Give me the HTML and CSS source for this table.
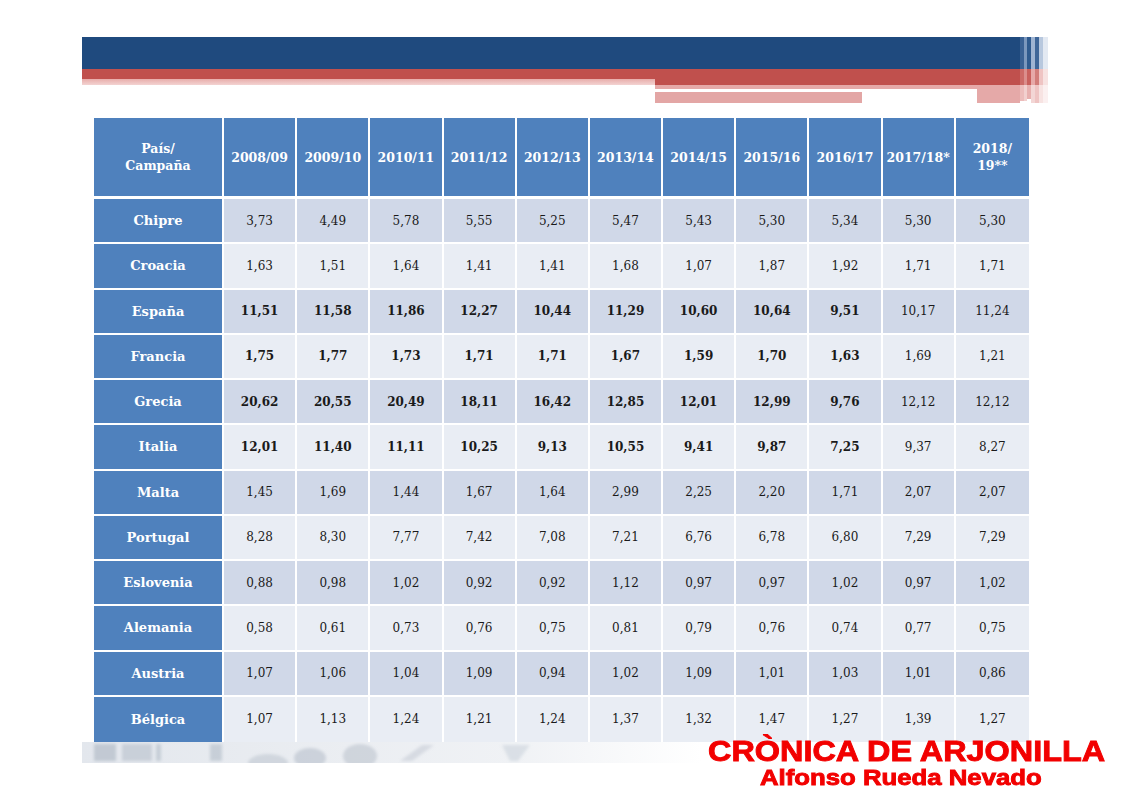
FILE: index.html
```html
<!DOCTYPE html>
<html lang="es">
<head>
<meta charset="utf-8">
<title>Producción de aceite de oliva por país</title>
<link rel="stylesheet" href="styles.css">
</head>
<body>
<div class="slide">
  <div class="banner">
    <div class="banner-main">
      <div class="b-blue"></div>
      <div class="b-red-row">
        <div class="b-left">
          <div class="b-red-thin"></div>
          <div class="b-pink-thin"></div>
        </div>
        <div class="b-red-right"></div>
      </div>
      <div class="b-under">
        <div class="b-spacer"></div>
        <div class="b-right">
          <div class="b-pink-top"></div>
          <div class="b-line-row">
            <div class="b-white-line"></div>
            <div class="b-pink-end"></div>
          </div>
          <div class="b-low-row">
            <div class="b-pink-block"></div>
            <div class="b-white-block"></div>
            <div class="b-pink-end"></div>
          </div>
        </div>
      </div>
    </div>
    <div class="banner-stripes">
      <span class="st st1"></span><span class="st st2"></span><span class="st st3"></span><span class="st st4"></span><span class="st st5"></span><span class="st st6"></span><span class="st st7"></span>
    </div>
  </div>

  <table class="data">
    <colgroup><col class="c-first"><col><col><col><col><col><col><col><col><col><col><col></colgroup>
    <thead>
      <tr>
        <th class="rowhead">País/<br>Campaña</th>
        <th>2008/09</th><th>2009/10</th><th>2010/11</th><th>2011/12</th><th>2012/13</th><th>2013/14</th><th>2014/15</th><th>2015/16</th><th>2016/17</th><th>2017/18*</th><th>2018/<br>19**</th>
      </tr>
    </thead>
    <tbody>
      <tr class="odd"><th>Chipre</th><td>3,73</td><td>4,49</td><td>5,78</td><td>5,55</td><td>5,25</td><td>5,47</td><td>5,43</td><td>5,30</td><td>5,34</td><td>5,30</td><td>5,30</td></tr>
      <tr class="even"><th>Croacia</th><td>1,63</td><td>1,51</td><td>1,64</td><td>1,41</td><td>1,41</td><td>1,68</td><td>1,07</td><td>1,87</td><td>1,92</td><td>1,71</td><td>1,71</td></tr>
      <tr class="odd strong"><th>España</th><td>11,51</td><td>11,58</td><td>11,86</td><td>12,27</td><td>10,44</td><td>11,29</td><td>10,60</td><td>10,64</td><td>9,51</td><td class="plain">10,17</td><td class="plain">11,24</td></tr>
      <tr class="even strong"><th>Francia</th><td>1,75</td><td>1,77</td><td>1,73</td><td>1,71</td><td>1,71</td><td>1,67</td><td>1,59</td><td>1,70</td><td>1,63</td><td class="plain">1,69</td><td class="plain">1,21</td></tr>
      <tr class="odd strong"><th>Grecia</th><td>20,62</td><td>20,55</td><td>20,49</td><td>18,11</td><td>16,42</td><td>12,85</td><td>12,01</td><td>12,99</td><td>9,76</td><td class="plain">12,12</td><td class="plain">12,12</td></tr>
      <tr class="even strong"><th>Italia</th><td>12,01</td><td>11,40</td><td>11,11</td><td>10,25</td><td>9,13</td><td>10,55</td><td>9,41</td><td>9,87</td><td>7,25</td><td class="plain">9,37</td><td class="plain">8,27</td></tr>
      <tr class="odd"><th>Malta</th><td>1,45</td><td>1,69</td><td>1,44</td><td>1,67</td><td>1,64</td><td>2,99</td><td>2,25</td><td>2,20</td><td>1,71</td><td>2,07</td><td>2,07</td></tr>
      <tr class="even"><th>Portugal</th><td>8,28</td><td>8,30</td><td>7,77</td><td>7,42</td><td>7,08</td><td>7,21</td><td>6,76</td><td>6,78</td><td>6,80</td><td>7,29</td><td>7,29</td></tr>
      <tr class="odd"><th>Eslovenia</th><td>0,88</td><td>0,98</td><td>1,02</td><td>0,92</td><td>0,92</td><td>1,12</td><td>0,97</td><td>0,97</td><td>1,02</td><td>0,97</td><td>1,02</td></tr>
      <tr class="even"><th>Alemania</th><td>0,58</td><td>0,61</td><td>0,73</td><td>0,76</td><td>0,75</td><td>0,81</td><td>0,79</td><td>0,76</td><td>0,74</td><td>0,77</td><td>0,75</td></tr>
      <tr class="odd"><th>Austria</th><td>1,07</td><td>1,06</td><td>1,04</td><td>1,09</td><td>0,94</td><td>1,02</td><td>1,09</td><td>1,01</td><td>1,03</td><td>1,01</td><td>0,86</td></tr>
      <tr class="even last"><th>Bélgica</th><td>1,07</td><td>1,13</td><td>1,24</td><td>1,21</td><td>1,24</td><td>1,37</td><td>1,32</td><td>1,47</td><td>1,27</td><td>1,39</td><td>1,27</td></tr>
    </tbody>
  </table>

  <div class="footer">
    <svg class="faded" width="620" height="21" viewBox="0 0 620 21" aria-hidden="true">
      <defs>
        <linearGradient id="fadeg" x1="0" x2="1" y1="0" y2="0">
          <stop offset="0" stop-color="#e3e7ed"/>
          <stop offset="0.7" stop-color="#f0f2f5"/>
          <stop offset="1" stop-color="#ffffff"/>
        </linearGradient>
        <filter id="bl"><feGaussianBlur stdDeviation="1.6"/></filter>
      </defs>
      <rect x="0" y="0" width="620" height="21" fill="url(#fadeg)"/>
      <g filter="url(#bl)" fill="#b3bcc8">
        <rect x="12" y="2" width="22" height="17" opacity="0.7"/>
        <rect x="40" y="2" width="30" height="17" opacity="0.55"/>
        <rect x="74" y="2" width="5" height="17" opacity="0.6"/>
        <rect x="128" y="2" width="12" height="17" opacity="0.6"/>
        <ellipse cx="186" cy="21" rx="20" ry="9" opacity="0.45"/>
        <ellipse cx="228" cy="16" rx="16" ry="10" opacity="0.55"/>
        <ellipse cx="278" cy="14" rx="17" ry="12" opacity="0.5"/>
        <polygon points="318,19 340,3 352,3 330,19" opacity="0.4"/>
        <polygon points="420,3 448,3 436,19 428,19" opacity="0.35"/>
      </g>
    </svg>
    <div class="watermark">
      <div class="wm-title">CRÒNICA DE ARJONILLA</div>
      <div class="wm-sub">Alfonso Rueda Nevado</div>
    </div>
  </div>
</div>
</body>
</html>
```

FILE: styles.css
```css
html, body {
  margin: 0;
  padding: 0;
  background: #ffffff;
}

.slide {
  position: relative;
  width: 1131px;
  height: 800px;
  padding: 37px 0 0 82px;
  box-sizing: border-box;
  font-family: "DejaVu Serif", "Liberation Serif", serif;
}

/* ---------- banner ---------- */
.banner {
  display: flex;
  width: 966px;
  height: 66px;
}
.banner-main {
  width: 938px;
  display: flex;
  flex-direction: column;
}
.b-blue {
  height: 32px;
  background: #1f4a7e;
}
.b-red-row {
  display: flex;
  height: 16px;
}
.b-left {
  width: 573px;
  display: flex;
  flex-direction: column;
}
.b-red-thin {
  height: 10px;
  background: #c0504d;
}
.b-pink-thin {
  height: 6px;
  background: linear-gradient(#e8adab, #f3d3d2);
}
.b-red-right {
  flex: 1;
  background: #c0504d;
}
.b-under {
  display: flex;
  height: 18px;
}
.b-spacer {
  width: 573px;
}
.b-right {
  flex: 1;
  display: flex;
  flex-direction: column;
}
.b-pink-top {
  height: 4px;
  background: #e5a9a8;
}
.b-line-row {
  display: flex;
  height: 3px;
}
.b-white-line {
  width: 322px;
  background: #ffffff;
}
.b-pink-end {
  flex: 1;
  background: #e5a9a8;
}
.b-low-row {
  display: flex;
  height: 11px;
}
.b-pink-block {
  width: 207px;
  background: #e3a6a5;
}
.b-white-block {
  width: 115px;
  background: #ffffff;
}

.banner-stripes {
  display: flex;
  width: 28px;
  height: 66px;
}
.st {
  display: block;
  height: 100%;
}
.st1 { width: 4px; background: linear-gradient(#3a6194 0 32px, #cc6a67 32px 48px, #ecbcbb 48px 64px, #fff 64px); }
.st2 { width: 3px; background: linear-gradient(#7b97bd 0 32px, #db8e8c 32px 48px, #f2d0cf 48px 64px, #fff 64px); }
.st3 { width: 4px; background: linear-gradient(#2f5a8e 0 32px, #c9605d 32px 48px, #e7b0af 48px 62px, #fff 62px); }
.st4 { width: 4px; background: linear-gradient(#9fb4d2 0 32px, #e7a9a8 32px 48px, #f3d6d5 48px 66px); }
.st5 { width: 4px; background: linear-gradient(#3f6698 0 32px, #d27d7a 32px 48px, #eec4c3 48px 66px); }
.st6 { width: 4px; background: linear-gradient(#b8c8de 0 32px, #efc4c3 32px 48px, #f7e3e2 48px 66px); }
.st7 { width: 5px; background: linear-gradient(#e3e9f2 0 32px, #f7e2e1 32px 48px, #fbf0f0 48px 66px); }

/* ---------- table ---------- */
.data {
  margin: 15px 0 0 12px;
  width: 935px;
  table-layout: fixed;
  border-collapse: separate;
  border-spacing: 0;
  font-size: 12px;
  color: #1a1a1a;
}
.c-first {
  width: 130px;
}
.data th,
.data td {
  padding: 0;
  text-align: center;
  vertical-align: middle;
  border-right: 2px solid #ffffff;
  border-bottom: 2px solid #ffffff;
  box-sizing: border-box;
}
.data th:last-child,
.data td:last-child {
  border-right: 0;
}
.data thead th {
  height: 81px;
  background: #4f81bd;
  color: #ffffff;
  font-weight: bold;
  font-size: 12.5px;
  line-height: 17px;
  border-bottom: 3px solid #ffffff;
}
.data tbody th {
  background: #4f81bd;
  color: #ffffff;
  font-weight: bold;
  font-size: 13px;
}
.data tbody tr {
  height: 45.25px;
}
.data tbody tr.last th,
.data tbody tr.last td {
  border-bottom: 0;
}
.odd td {
  background: #d0d8e8;
}
.even td {
  background: #e9edf4;
}
.strong td {
  font-weight: bold;
}
.strong td.plain {
  font-weight: normal;
}

/* ---------- footer ---------- */
.footer {
  display: flex;
  width: 966px;
}
.faded {
  display: block;
}
.watermark {
  position: absolute;
  left: 708px;
  top: 736px;
  font-family: "Liberation Sans", Arial, sans-serif;
  font-weight: bold;
  color: #f20000;
  -webkit-text-stroke: 0.9px #f20000;
  line-height: 1;
  white-space: nowrap;
}
.wm-title {
  font-size: 30px;
  transform: scaleX(1.08);
  transform-origin: left top;
}
.wm-sub {
  margin: 1px 0 0 52px;
  font-size: 22px;
  transform: scaleX(1.17);
  transform-origin: left top;
}
```
